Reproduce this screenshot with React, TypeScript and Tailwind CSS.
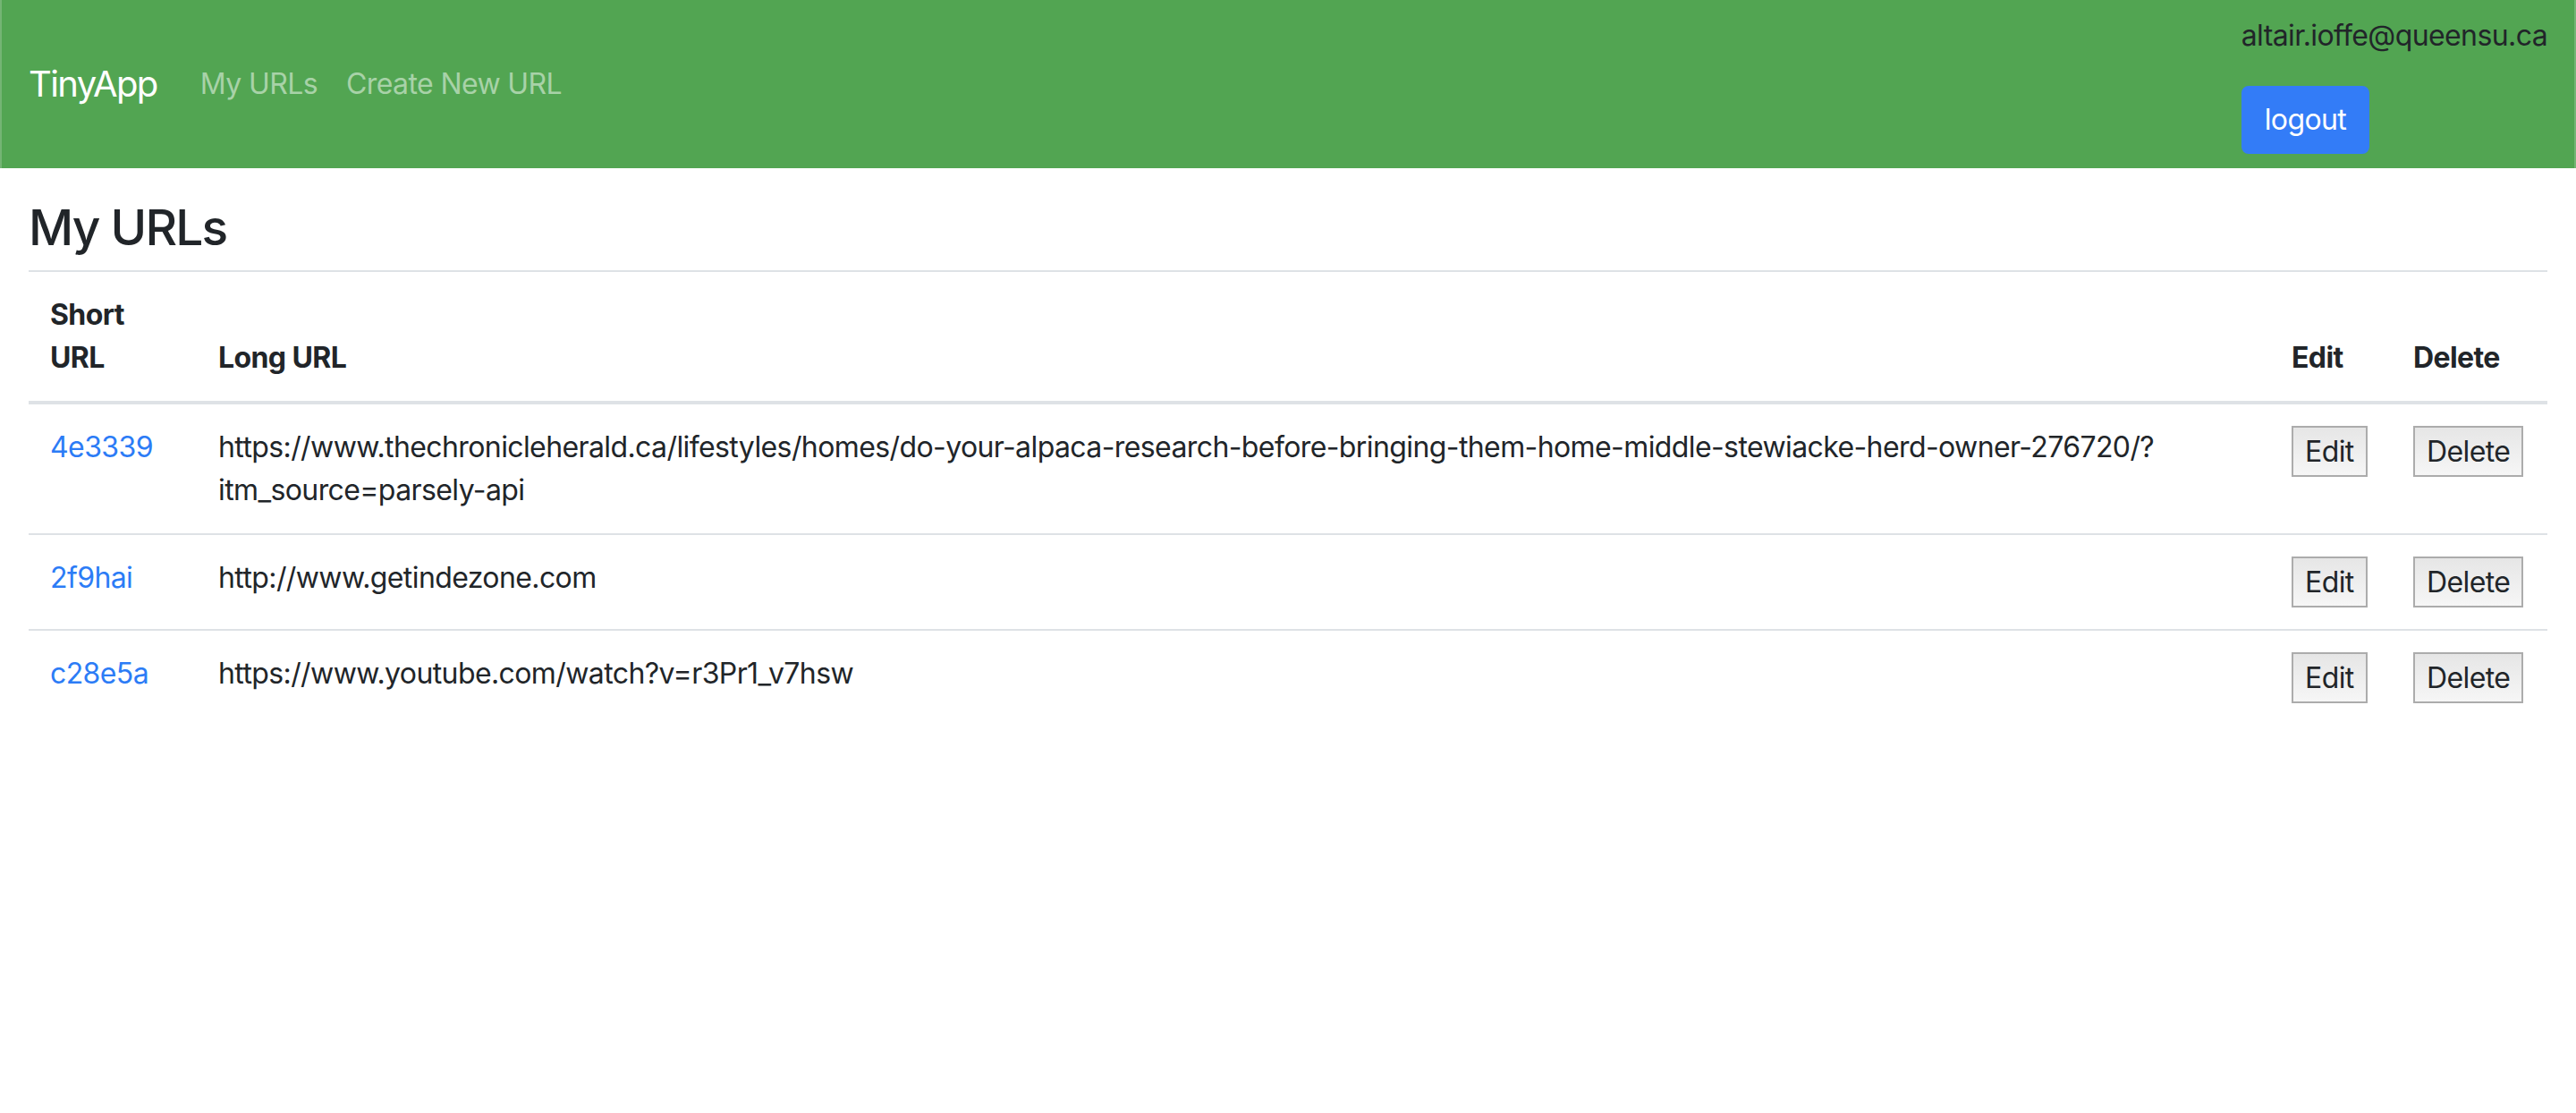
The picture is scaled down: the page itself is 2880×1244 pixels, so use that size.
import React from "react";

const urls = [
  {
    id: "4e3339",
    long: "https://www.thechronicleherald.ca/lifestyles/homes/do-your-alpaca-research-before-bringing-them-home-middle-stewiacke-herd-owner-276720/?itm_source=parsely-api",
  },
  { id: "2f9hai", long: "http://www.getindezone.com" },
  { id: "c28e5a", long: "https://www.youtube.com/watch?v=r3Pr1_v7hsw" },
];

function PlainButton({ children }: { children: React.ReactNode }) {
  return (
    <button className="border-2 border-[#acacac] bg-gradient-to-b from-[#e6e6e6] to-[#f6f6f6] px-[13px] py-[2px] text-[32px] leading-[49px] tracking-[-0.6px] text-[#212529]">
      {children}
    </button>
  );
}

export default function App() {
  return (
    <div className="min-h-screen bg-white font-[Inter,sans-serif] tracking-[-0.6px] text-[#212529]">
      <nav className="flex items-center border-x-2 border-[#74b574] bg-[#52a552] px-[30px] py-4">
        <a href="#" className="mr-8 py-[10px] text-[40px] leading-[60px] tracking-[-1.6px] text-white">
          TinyApp
        </a>
        <a href="#" className="px-4 py-4 text-[32px] leading-[48px] text-[#a8d2a8]">
          My URLs
        </a>
        <a href="#" className="px-4 py-4 text-[32px] leading-[48px] text-[#a8d2a8]">
          Create New URL
        </a>
        <div className="ml-auto flex flex-col items-start">
          <span className="text-[32px] leading-[48px] text-[#212529]">altair.ioffe@queensu.ca</span>
          <button className="mt-8 rounded-lg border-2 border-[#337cf7] bg-[#337cf7] px-6 py-3 text-[32px] leading-[48px] text-white">
            logout
          </button>
        </div>
      </nav>

      <main className="px-8">
        <h2 className="mb-3 mt-[30px] text-[55px] font-medium leading-[72px] tracking-[-1.8px]">My URLs</h2>
        <table className="w-full table-fixed border-collapse text-left text-[32px] leading-[48px]">
          <thead>
            <tr>
              <th className="w-[188px] border-b-4 border-t-2 border-[#dee2e6] p-6 align-bottom font-bold">Short URL</th>
              <th className="border-b-4 border-t-2 border-[#dee2e6] p-6 align-bottom font-bold">Long URL</th>
              <th className="w-[136px] border-b-4 border-t-2 border-[#dee2e6] p-6 align-bottom font-bold">Edit</th>
              <th className="w-[174px] border-b-4 border-t-2 border-[#dee2e6] p-6 align-bottom font-bold">Delete</th>
            </tr>
          </thead>
          <tbody>
            {urls.map((u) => (
              <tr key={u.id}>
                <td className="border-t-2 border-[#dee2e6] p-6 align-top">
                  <a href="#" className="text-[#2c7cf6]">
                    {u.id}
                  </a>
                </td>
                <td className="border-t-2 border-[#dee2e6] p-6 align-top">{u.long}</td>
                <td className="border-t-2 border-[#dee2e6] p-6 align-top">
                  <PlainButton>Edit</PlainButton>
                </td>
                <td className="border-t-2 border-[#dee2e6] p-6 align-top">
                  <PlainButton>Delete</PlainButton>
                </td>
              </tr>
            ))}
          </tbody>
        </table>
      </main>
    </div>
  );
}
